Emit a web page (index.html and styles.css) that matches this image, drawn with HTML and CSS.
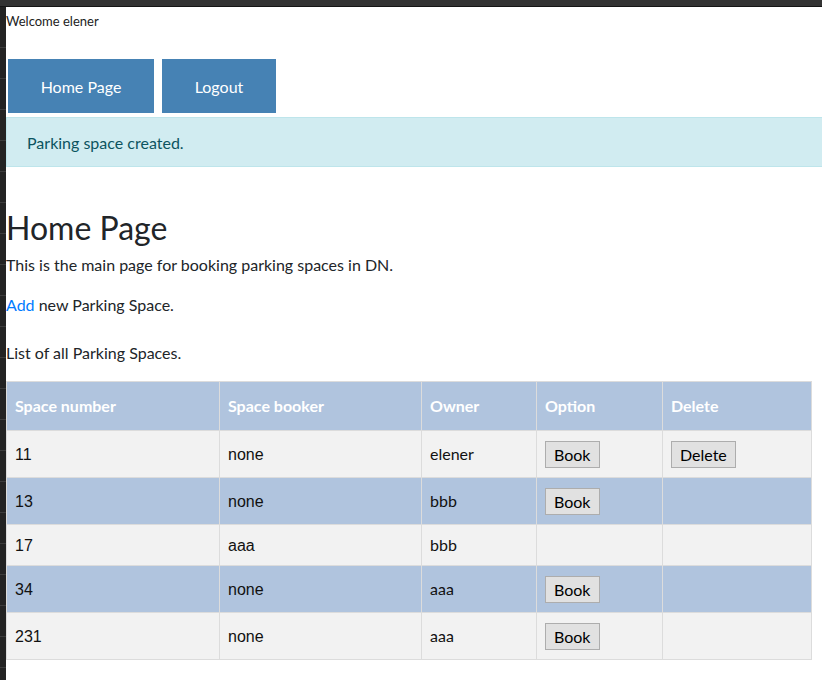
FILE: index.html
```html
<!DOCTYPE html>
<html lang="en">
<head>
<meta charset="utf-8">
<title>Home Page</title>
<link rel="stylesheet" href="styles.css">
</head>
<body>
<div class="chrome-top"></div>
<div class="frame">
  <div class="chrome-left"></div>
  <main class="page">
    <div class="welcome">Welcome elener</div>
    <nav class="nav">
      <a class="nav-btn home" href="#">Home Page</a>
      <a class="nav-btn" href="#">Logout</a>
    </nav>
    <div class="alert">Parking space created.</div>
    <h1 class="title">Home Page</h1>
    <p class="intro">This is the main page for booking parking spaces in DN.</p>
    <p class="add"><a href="#">Add</a> new Parking Space.</p>
    <p class="list-title">List of all Parking Spaces.</p>
    <table class="spaces">
      <colgroup>
        <col class="c1"><col class="c2"><col class="c3"><col class="c4"><col class="c5">
      </colgroup>
      <thead>
        <tr><th>Space number</th><th>Space booker</th><th>Owner</th><th>Option</th><th>Delete</th></tr>
      </thead>
      <tbody>
        <tr class="odd"><td class="num">11</td><td class="num">none</td><td>elener</td><td><button class="btn">Book</button></td><td><button class="btn">Delete</button></td></tr>
        <tr class="even"><td class="num">13</td><td class="num">none</td><td>bbb</td><td><button class="btn">Book</button></td><td></td></tr>
        <tr class="odd"><td class="num">17</td><td class="num">aaa</td><td>bbb</td><td></td><td></td></tr>
        <tr class="even"><td class="num">34</td><td class="num">none</td><td>aaa</td><td><button class="btn">Book</button></td><td></td></tr>
        <tr class="odd"><td class="num">231</td><td class="num">none</td><td>aaa</td><td><button class="btn">Book</button></td><td></td></tr>
      </tbody>
    </table>
  </main>
</div>
</body>
</html>
```

FILE: styles.css
```css
html, body {
  margin: 0;
  padding: 0;
  background: #ffffff;
}
body {
  font-family: Lato, "Noto Sans", sans-serif;
  color: #212529;
  font-size: 16px;
  line-height: 24px;
  overflow: hidden;
  height: 680px;
}
.chrome-top {
  height: 6px;
  background: #333333;
  border-bottom: 1px solid #151515;
}
.frame {
  display: flex;
  height: 673px;
}
.chrome-left {
  width: 6px;
  flex: none;
  background:
    repeating-linear-gradient(to bottom, #232323 0, #232323 30px, #3c3c3c 30px, #3c3c3c 31px);
  background-position: 0 10px;
}
.page {
  flex: 1;
  min-width: 0;
}
.welcome {
  font-size: 13px;
  line-height: 16px;
  padding-top: 6px;
  height: 46px;
  color: #222;
}
.nav {
  display: flex;
  gap: 8px;
  padding-left: 2px;
}
.nav-btn {
  display: block;
  background: #4682b4;
  color: #ffffff;
  text-decoration: none;
  height: 54px;
  line-height: 56px;
  text-align: center;
  font-size: 16px;
}
.nav-btn.home { width: 146px; }
.nav-btn:not(.home) { width: 114px; }
.alert {
  margin-top: 4px;
  background: #d1ecf1;
  border: 1px solid #bee5eb;
  border-right: none;
  color: #0c5460;
  padding: 13px 20px 11px;
  height: 24px;
  margin-bottom: 44px;
}
.title {
  margin: 0;
  font-size: 32px;
  font-weight: 400;
  line-height: 34px;
  padding-bottom: 8px;
}
.intro {
  margin: 0 0 16px;
}
.add {
  margin: 0 0 24px;
}
.add a {
  color: #007bff;
  text-decoration: none;
}
.list-title {
  margin: 0 0 16px;
}
.spaces {
  border-collapse: collapse;
  table-layout: fixed;
  width: 805px;
}
.c1 { width: 213px; }
.c2 { width: 202px; }
.c3 { width: 115px; }
.c4 { width: 126px; }
.c5 { width: 149px; }
.spaces th, .spaces td {
  border: 1px solid #dcdcdc;
  text-align: left;
}
.spaces th {
  background: #b0c4de;
  color: #ffffff;
  font-family: Lato, sans-serif;
  font-weight: bold;
  font-size: 16px;
  padding: 12px 8px 12px;
  line-height: 24px;
}
.spaces td {
  padding: 8px 8px;
  height: 24px;
  color: #111;
  vertical-align: middle;
}
.spaces td.num {
  font-family: "Liberation Sans", Arial, sans-serif;
  font-size: 16px;
  padding: 9px 8px 7px;
}
.odd { background: #f2f2f2; }
.even { background: #b0c4de; }
.btn {
  font-family: Lato, "Noto Sans", sans-serif;
  font-size: 16px;
  height: 27px;
  line-height: 23px;
  padding: 0 8px;
  background: #e1e1e1;
  border: 1px solid #adadad;
  border-radius: 0;
  color: #000;
  margin: 2px 0 1px;
  vertical-align: middle;
}
```
